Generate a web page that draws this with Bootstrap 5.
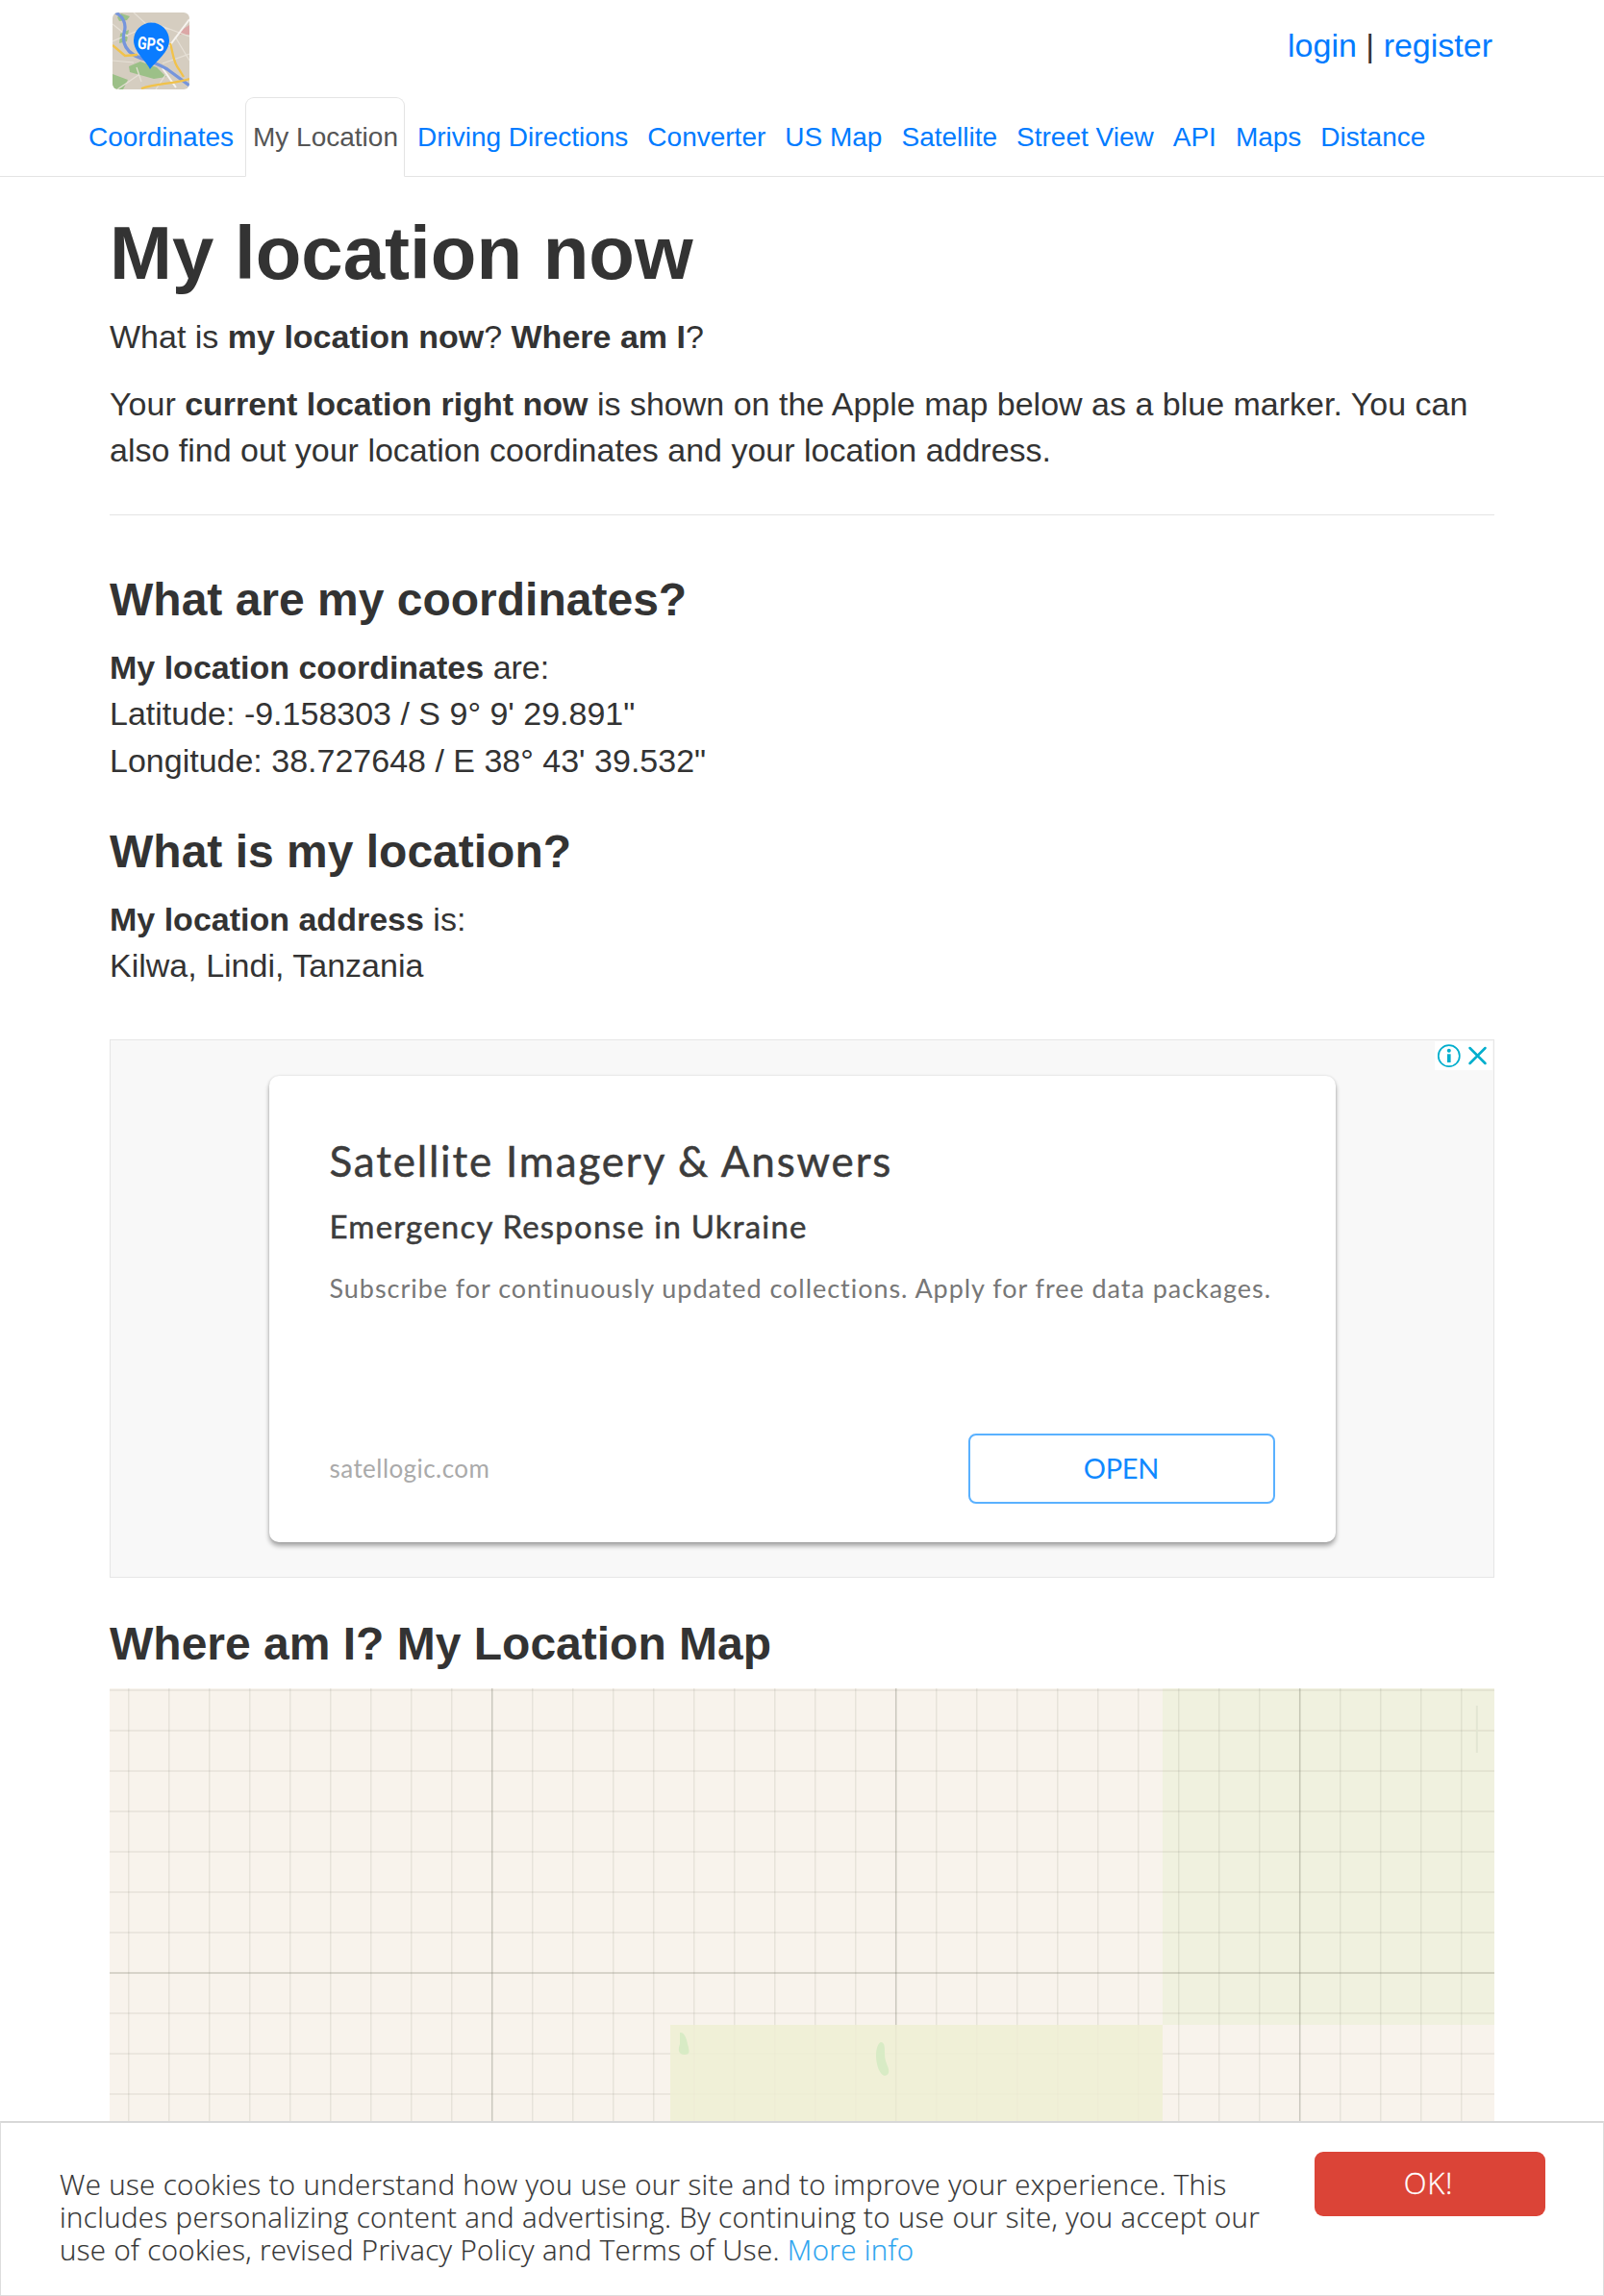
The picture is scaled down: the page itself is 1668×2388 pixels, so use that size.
<!DOCTYPE html>
<html lang="en">
<head>
<meta charset="utf-8">
<meta name="viewport" content="width=device-width, initial-scale=1">
<title>My location now</title>
<link href="https://cdn.jsdelivr.net/npm/bootstrap@5.3.0/dist/css/bootstrap.min.css" rel="stylesheet">
<style>
html,body{height:2388px;overflow:hidden}
body{font-family:"Liberation Sans",Arial,sans-serif;font-size:34px;line-height:48.57px;color:#333;background:#fff}
a{color:#007bff;text-decoration:none}
.page-wrap{width:1440px;max-width:none;padding:0}
.site-head{height:101px;padding:13px 0 0 3px}
.account{line-height:48px;margin-top:10px;padding-right:2px}
.tabs-main{padding-left:84.5px;height:83px;gap:5px;border-bottom:1px solid #e4e4e4;flex-wrap:nowrap}
.tabs-main .nav-link{font-size:28px;line-height:40px;padding:21px 6.5px 17px;border:1px solid transparent;border-radius:9px 9px 0 0;color:#007bff;height:83px;margin:0;white-space:nowrap}
.tabs-main .nav-link.active{color:#555;border-color:#e4e4e4 #e4e4e4 #fff}
h1{font-size:78px;line-height:86px;font-weight:700;margin:36px 0 20px}
h2{font-size:48px;line-height:53px;font-weight:700;margin:0}
p{margin:0 0 21px}
.rule{height:1px;background:#e4e4e4;margin-top:42px}
.h-coords{margin-top:61px}
.t-coords{margin:20px 0 0}
.h-addr{margin-top:43.5px}
.t-addr{margin:20px 0 0}
.h-map{margin:42px 0 20px}
.ad-slot{height:560px;margin-top:51.5px;border:1px solid #e6e6e6;background:#f8f8f8;padding-top:37px;position:relative}
.ad-card{width:1109px;height:485px;border:0;border-radius:10px;box-shadow:0 4px 5px rgba(0,0,0,.33),0 0 3px rgba(0,0,0,.12);padding:0 63px;font-family:Lato,"Open Sans",sans-serif;color:#3c3c3c;margin:0 auto;white-space:nowrap}
.ad-title{font-size:44px;line-height:60px;margin-top:58px;letter-spacing:1.8px;-webkit-text-stroke:.5px}
.ad-sub{font-size:33px;line-height:44px;margin-top:16px;letter-spacing:1.2px;-webkit-text-stroke:.5px}
.ad-desc{font-size:27px;line-height:40px;margin-top:23px;color:#777;letter-spacing:.96px}
.ad-foot{margin-top:auto;margin-bottom:40px}
.ad-host{font-size:26px;color:#aaa;letter-spacing:.45px}
.ad-open{width:319px;height:73px;border:2px solid #5ab1ff;border-radius:8px;color:#1089ff;font-size:29px;line-height:67px;padding:0;letter-spacing:-.3px}
.ad-mark{position:absolute;top:1px;right:1px;width:60px;height:30px;background:#fff}
.map-view{display:block;width:1440px;height:632px}
.cookie-bar{height:182px;background:#fff;border:1px solid #ddd;border-top:2px solid #d8d8d8;padding:30px 60px 0 61px;font-family:"Open Sans",sans-serif;font-weight:300;font-size:29.5px;line-height:34.3px}
.cookie-text{margin-top:16.5px;white-space:nowrap;letter-spacing:.35px;-webkit-text-stroke:.2px}
.cookie-text a{color:#2aa3ef}
.cookie-ok{width:240px;height:67px;background:#db4437;color:#fff;border:0;border-radius:9px;font-size:31px;font-weight:300;line-height:62px;padding:0 3px 3px 0;letter-spacing:.8px;-webkit-text-stroke:.3px}
</style>
</head>
<body>
<header>
  <div class="container page-wrap site-head d-flex justify-content-between align-items-start">
    <a href="#" aria-label="GPS coordinates" class="d-block lh-1">
      <svg width="80" height="80" viewBox="0 0 80 80">
        <defs><clipPath id="logoclip"><rect width="80" height="80" rx="6"/></clipPath></defs>
        <g clip-path="url(#logoclip)">
          <rect width="80" height="80" fill="#d5cdc0"/>
          <path d="M5 5l4-4 9 3-3 4-8 1zM8 22l9-4-2 12-8 2zM0 64l16 6-5 10H0zM17 56l12-5 17 6 10 10-13 2-25-7z" fill="#9cc088"/>
          <path d="M69 20l11-7v10l-10 0z" fill="#dba7a6"/>
          <path d="M0 30l26-11M0 50l22 2M22 0l14 13 26 5M40 10L80 25M65 25l15 25M0 12l16 13M30 72L25 57M45 80l10-15M52 53L80 43M5 80l22-15" stroke="#e6e0d6" stroke-width="1.2" fill="none"/>
          <path d="M59 35L80 7M52 58l14 20" stroke="#f6f3ee" stroke-width="2" fill="none"/>
          <path d="M3 0c8 4 12 12 9 21-2 10 2 18 10 23s20 6 35 15l23 17" stroke="#7595dc" stroke-width="3.3" fill="none"/>
          <path d="M0 34l13 11 13-1M60 32c3 10 3 20 9 27l5 8M30 79c15-5 34-5 50-10" stroke="#f1c24a" stroke-width="2.3" fill="none"/>
          <path d="M39 59C35 50 22 41 22 29a18.500 18.500 0 0 1 37 0c0 12-13 21-20 30z" fill="#0a7cff"/>
          <text x="25.500" y="37.500" transform="rotate(6 25.500 37.500)" textLength="27.500" lengthAdjust="spacingAndGlyphs" font-family="Roboto" font-weight="700" font-size="18" fill="#fff">GPS</text>
        </g>
      </svg>
    </a>
    <div class="account"><a href="#">login</a> | <a href="#">register</a></div>
  </div>
  <nav class="nav nav-tabs tabs-main">
    <a class="nav-link" href="#">Coordinates</a>
    <a class="nav-link active" href="#">My Location</a>
    <a class="nav-link" href="#">Driving Directions</a>
    <a class="nav-link" href="#">Converter</a>
    <a class="nav-link" href="#">US Map</a>
    <a class="nav-link" href="#">Satellite</a>
    <a class="nav-link" href="#">Street View</a>
    <a class="nav-link" href="#">API</a>
    <a class="nav-link" href="#">Maps</a>
    <a class="nav-link" href="#">Distance</a>
  </nav>
</header>
<main class="container page-wrap">
  <h1>My location now</h1>
  <p>What is <b>my location now</b>? <b>Where am I</b>?</p>
  <p>Your <b>current location right now</b> is shown on the Apple map below as a blue marker. You can<br>also find out your location coordinates and your location address.</p>
  <div class="rule"></div>
  <h2 class="h-coords">What are my coordinates?</h2>
  <p class="t-coords"><b>My location coordinates</b> are:<br>Latitude: -9.158303 / S 9° 9' 29.891"<br>Longitude: 38.727648 / E 38° 43' 39.532"</p>
  <h2 class="h-addr">What is my location?</h2>
  <p class="t-addr"><b>My location address</b> is:<br>Kilwa, Lindi, Tanzania</p>
  <section class="ad-slot">
    <div class="card ad-card">
      <div class="ad-title">Satellite Imagery &amp; Answers</div>
      <div class="ad-sub">Emergency Response in Ukraine</div>
      <div class="ad-desc">Subscribe for continuously updated collections. Apply for free data packages.</div>
      <div class="ad-foot d-flex justify-content-between align-items-center">
        <span class="ad-host">satellogic.com</span>
        <a class="btn ad-open" href="#">OPEN</a>
      </div>
    </div>
    <svg class="ad-mark" viewBox="0 0 60 30" fill="none" stroke="#00aecd">
      <circle cx="14.8" cy="15.2" r="11" stroke-width="1.7"/>
      <path d="M13 13.3h3.6v8.7H13z" fill="#00aecd" stroke="none"/><circle cx="14.8" cy="9.7" r="2" fill="#00aecd" stroke="none"/>
      <path d="M36.500 7l16 16M52.500 7l-16 16" stroke-width="2.5" stroke-linecap="round"/>
    </svg>
  </section>
  <h2 class="h-map">Where am I? My Location Map</h2>
  <svg class="map-view" viewBox="114 1756 1440 632">
    <defs>
      <pattern id="minor" x="133" y="1757" width="42" height="42" patternUnits="userSpaceOnUse"><path d="M0 1h42" stroke="#777765" stroke-opacity=".1" stroke-width="2"/><path d="M.75 0v42" stroke="#777765" stroke-opacity=".13" stroke-width="1.5"/></pattern>
    </defs>
    <rect x="114" y="1756" width="1440" height="632" fill="#f8f3ec"/>
    <path d="M1209 1756h345v350h-345z" fill="#f0f1df"/>
    <rect x="114" y="1756" width="1440" height="632" fill="url(#minor)"/>
    <path d="M114 2052h1440" stroke="#777765" stroke-opacity=".17" stroke-width="2"/>
    <path d="M511.700 1756v632M931.700 1756v632M1351.700 1756v632" stroke="#777765" stroke-opacity=".24" stroke-width="1.5"/>
    <path d="M1535.800 1774v49" stroke="#e2e5d2" stroke-width="2"/>
    <path d="M697 2106h512v282H697z" fill="#eeefd3" fill-opacity=".85"/>
    <path d="M707 2114c4-1 7 5 8 12 2 7 3 11-3 11-7 0-7-6-5-11z" fill="#d8ebc5"/>
    <path d="M916 2124c4 0 4 5 4 11s1 9 3 14 2 9-3 10c-5-1-9-11-9-21 0-7 2-13 5-14z" fill="#d8ebc5"/>
  </svg>
</main>
<aside class="cookie-bar fixed-bottom d-flex justify-content-between align-items-start">
  <div class="cookie-text">
    <div>We use cookies to understand how you use our site and to improve your experience. This</div>
    <div>includes personalizing content and advertising. By continuing to use our site, you accept our</div>
    <div>use of cookies, revised Privacy Policy and Terms of Use. <a href="#">More info</a></div>
  </div>
  <button class="btn cookie-ok" type="button">OK!</button>
</aside>
<script src="https://cdn.jsdelivr.net/npm/bootstrap@5.3.0/dist/js/bootstrap.bundle.min.js"></script>
</body>
</html>
